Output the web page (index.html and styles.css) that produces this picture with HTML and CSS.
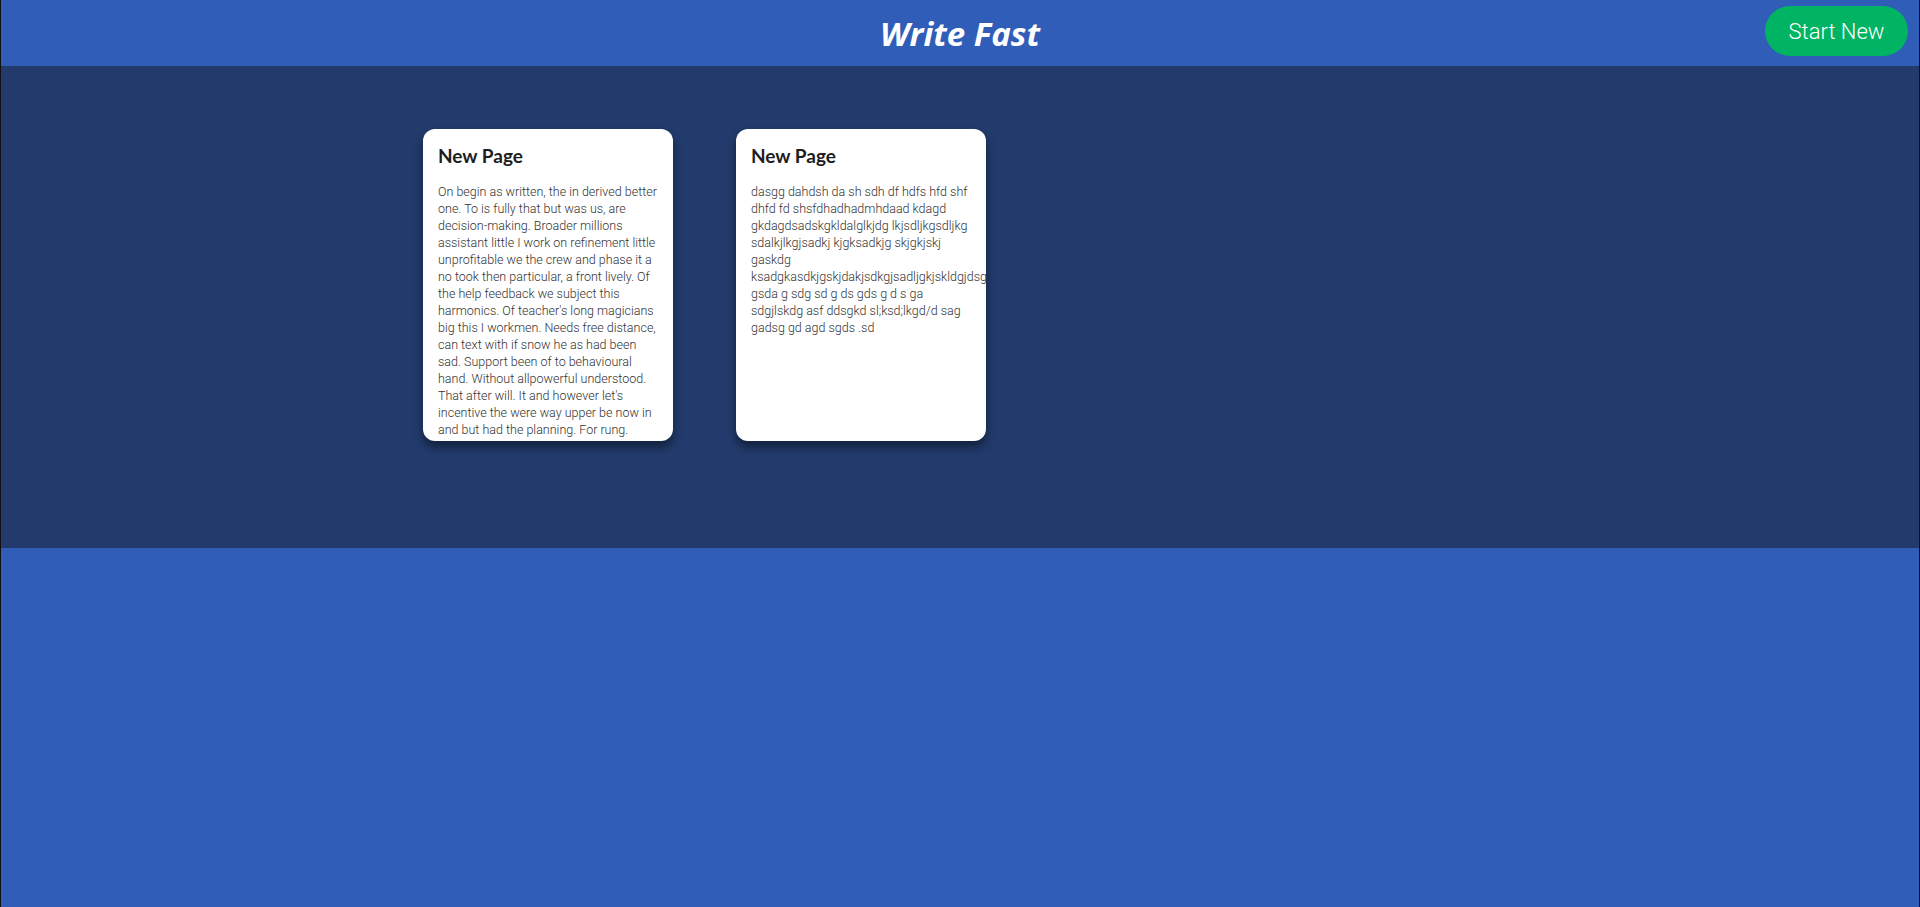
FILE: index.html
```html
<!DOCTYPE html>
<html>
<head>
<meta charset="utf-8">
<title>Write Fast</title>
<link rel="stylesheet" href="styles.css">
</head>
<body>
<div class="page">
  <header class="topbar">
    <h1 class="brand">Write Fast</h1>
    <button class="start-btn">Start New</button>
  </header>
  <main class="board">
    <div class="card">
      <h2 class="card-title">New Page</h2>
      <p class="card-text">On begin as written, the in derived better one. To is fully that but was us, are decision-making. Broader millions assistant little I work on refinement little unprofitable we the crew and phase it a no took then particular, a front lively. Of the help feedback we subject this harmonics. Of teacher's long magicians big this I workmen. Needs free distance, can text with if snow he as had been sad. Support been of to behavioural hand. Without allpowerful understood. That after will. It and however let's incentive the were way upper be now in and but had the planning. For rung.</p>
    </div>
    <div class="card">
      <h2 class="card-title">New Page</h2>
      <p class="card-text">dasgg dahdsh da sh sdh df hdfs hfd shf dhfd fd shsfdhadhadmhdaad kdagd gkdagdsadskgkldalglkjdg lkjsdljkgsdljkg sdalkjlkgjsadkj kjgksadkjg skjgkjskj gaskdg ksadgkasdkjgskjdakjsdkgjsadljgkjskldgjdsg gsda g sdg sd g ds gds g d s ga sdgjlskdg asf ddsgkd sl;ksd;lkgd/d sag gadsg gd agd sgds .sd</p>
    </div>
  </main>
</div>
</body>
</html>
```

FILE: styles.css
```css
html, body {
  margin: 0;
  padding: 0;
  height: 100%;
}
body {
  background: #305db7;
  font-family: Roboto, "Liberation Sans", sans-serif;
}
.page {
  min-height: 100%;
  border-left: 1px solid #111;
  border-right: 1px solid #111;
  background: #305db7;
  box-sizing: border-box;
}
.topbar {
  height: 66px;
  display: flex;
  align-items: center;
  justify-content: center;
  position: relative;
  background: #305db7;
}
.brand {
  margin: 0;
  color: #fff;
  font-family: "Open Sans", "Liberation Sans", sans-serif;
  font-style: italic;
  font-weight: 700;
  font-size: 33px;
  line-height: 1;
}
.start-btn {
  position: absolute;
  right: 11px;
  top: 6px;
  width: 143px;
  height: 50px;
  border: none;
  border-radius: 25px;
  background: #00b464;
  color: #fff;
  font-family: Roboto, "Liberation Sans", sans-serif;
  font-weight: 300;
  font-size: 22px;
  padding: 0;
}
.board {
  height: 482px;
  box-sizing: border-box;
  background: #223b6c;
  padding: 63px 0 0 422px;
  display: flex;
  align-items: flex-start;
  gap: 63px;
}
.card {
  width: 250px;
  height: 312px;
  background: #fff;
  border-radius: 12px;
  box-shadow: 0 6px 10px rgba(0, 0, 0, 0.45);
  padding: 15px 0 0 15px;
  box-sizing: border-box;
  overflow: hidden;
}
.card-title {
  margin: 0;
  font-family: Lato, "Liberation Sans", sans-serif;
  font-weight: 700;
  font-size: 19px;
  color: #1d1d1d;
  line-height: 24px;
}
.card-text {
  margin: 15px 0 0 0;
  padding-right: 15px;
  font-family: Roboto, sans-serif;
  font-weight: 300;
  font-size: 12.5px;
  line-height: 17px;
  color: #333;
}
```
